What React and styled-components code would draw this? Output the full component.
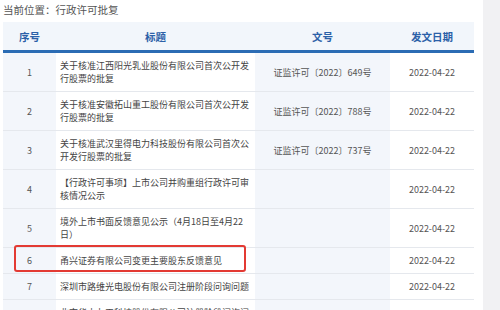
import styled, { createGlobalStyle } from 'styled-components'

const rows = [
  { no: 1, title: '关于核准江西阳光乳业股份有限公司首次公开发行股票的批复', doc: '证监许可〔2022〕649号', date: '2022-04-22' },
  { no: 2, title: '关于核准安徽拓山重工股份有限公司首次公开发行股票的批复', doc: '证监许可〔2022〕788号', date: '2022-04-22' },
  { no: 3, title: '关于核准武汉里得电力科技股份有限公司首次公开发行股票的批复', doc: '证监许可〔2022〕737号', date: '2022-04-22' },
  { no: 4, title: '【行政许可事项】上市公司并购重组行政许可审核情况公示', doc: '', date: '2022-04-22' },
  { no: 5, title: '境外上市书面反馈意见公示（4月18日至4月22日）', doc: '', date: '2022-04-22' },
  { no: 6, title: '甬兴证券有限公司变更主要股东反馈意见', doc: '', date: '2022-04-22', marked: true },
  { no: 7, title: '深圳市路维光电股份有限公司注册阶段问询问题', doc: '', date: '2022-04-22' },
  { no: 8, title: '北京华大九天科技股份有限公司注册阶段问询问题', doc: '', date: '2022-04-22' },
]

export default function App() {
  return (
    <>
      <GlobalStyle />
      <Page>
        <Main>
          <Breadcrumb>当前位置：行政许可批复</Breadcrumb>
          <Table>
            <HeadRow>
              <HeadCell>序号</HeadCell>
              <HeadCell>标题</HeadCell>
              <HeadCell>文号</HeadCell>
              <HeadCell>发文日期</HeadCell>
            </HeadRow>
            {rows.map(row => (
              <Row key={row.no}>
                <Cell $shaded>{row.no}</Cell>
                <TitleCell>{row.title}</TitleCell>
                <Cell $shaded>{row.doc}</Cell>
                <Cell>{row.date}</Cell>
                {row.marked && <Highlight />}
              </Row>
            ))}
          </Table>
        </Main>
        <Aside />
      </Page>
    </>
  )
}

const GlobalStyle = createGlobalStyle`
  body {
    margin: 0;
    background: #ffffff;
    font-family: "Noto Sans CJK SC", "Noto Sans", sans-serif;
    color: #555;
    overflow: hidden;
  }
`
const Page = styled.div`
  display: flex;
  height: 310px;
  overflow: hidden;
`
const Main = styled.div`
  width: 483px;
  padding-left: 3px;
  box-sizing: border-box;
`
const Aside = styled.div`
  flex: 1;
  background: #f1f1f3;
`
const Breadcrumb = styled.div`
  height: 22px;
  line-height: 20px;
  font-size: 10.5px;
  color: #555;
`
const Table = styled.div`
  width: 471px;
`
const columns = '53px 199px 135px 84px'

const HeadRow = styled.div`
  display: grid;
  grid-template-columns: ${columns};
  height: 28px;
  background: #f2f6fb;
  border-bottom: 3px solid #2b6cb4;
`
const HeadCell = styled.div`
  display: flex;
  align-items: center;
  justify-content: center;
  font-size: 10.5px;
  font-weight: 700;
  color: #2c61a8;
`
const Row = styled.div`
  position: relative;
  display: grid;
  grid-template-columns: ${columns};
  border-bottom: 1px solid #e5e8ed;
  font-size: 9px;
  line-height: 13px;
`
const Cell = styled.div`
  display: flex;
  align-items: center;
  justify-content: center;
  padding: 6px 0;
  background: ${p => (p.$shaded ? '#f3f6fb' : '#ffffff')};
  color: #555;
`
const TitleCell = styled.div`
  padding: 6px 6px 6px 4px;
  color: #444;
`
const Highlight = styled.div`
  position: absolute;
  left: 11px;
  top: -3px;
  width: 232px;
  height: 27px;
  box-sizing: border-box;
  border: 2px solid #e33a33;
  border-radius: 3px;
  pointer-events: none;
`
